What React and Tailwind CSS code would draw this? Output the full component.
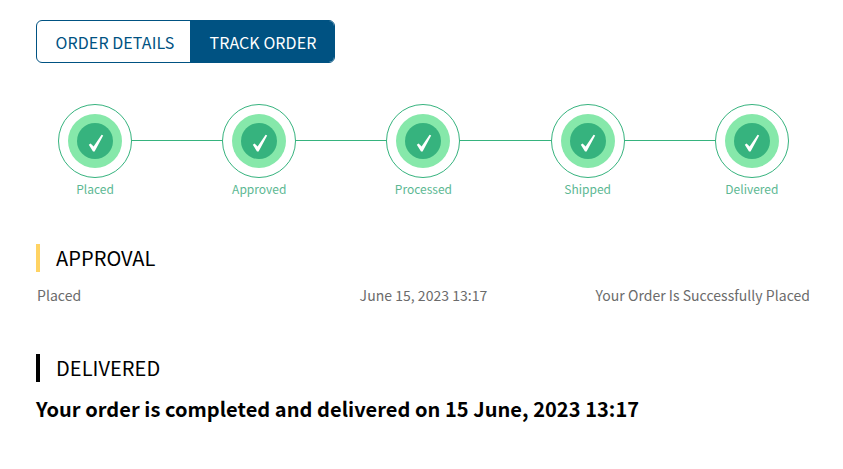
import React from 'react';

const steps = ['Placed', 'Approved', 'Processed', 'Shipped', 'Delivered'];

const Step = ({ label }) => (
    <div className="relative flex w-[74px] flex-col items-center">
        <div className="flex h-[74px] w-[74px] items-center justify-center rounded-full border border-[#36b37e] bg-white">
            <div className="flex h-[54px] w-[54px] items-center justify-center rounded-full bg-[#86e8aa]">
                <div className="flex h-9 w-9 items-center justify-center rounded-full bg-[#36b37e]">
                    <svg className="mt-[3px] ml-px" width="16" height="18" viewBox="0 0 16 18" fill="white">
                        <path d="M0.8 10.8 L2.6 9.6 L5.6 12.6 L13.6 0.8 L15.2 1.6 L6.6 17.4 L5 17.4 Z" />
                    </svg>
                </div>
            </div>
        </div>
        <span className="mt-[2px] whitespace-nowrap text-xs leading-[18px] text-[#5cb893]">{label}</span>
    </div>
);

const App = () => {
    return (
        <div className="h-[469px] w-[843px] bg-white pl-9 pt-5 font-['Noto_Sans_CJK_SC',sans-serif]">
            <div className="flex h-[43px] w-[299px] overflow-hidden rounded-md border border-[#005282]">
                <div className="flex w-[153px] items-center justify-center pl-[3px] text-base tracking-[0.08px] text-[#005282]">ORDER DETAILS</div>
                <div className="flex flex-1 items-center justify-center bg-[#005282] pl-[2px] text-base tracking-[0.08px] text-white">TRACK ORDER</div>
            </div>

            <div className="relative mt-[41px] ml-[22px] flex w-[730.9px] justify-between">
                <div className="absolute left-[37px] right-[37px] top-[36px] h-px bg-[#36b37e]" />
                {steps.map((step) => (
                    <Step key={step} label={step} />
                ))}
            </div>

            <div className="mt-[46px] flex h-7 items-center border-l-4 border-[#ffd363] pl-4 text-xl tracking-[0.05px] text-black">APPROVAL</div>
            <div className="mt-[13px] grid w-[774px] grid-cols-3 pl-px text-sm leading-5 tracking-[0.03px] text-[#6b6b6b]">
                <span>Placed</span>
                <span className="text-center">June 15, 2023 13:17</span>
                <span className="text-right">Your Order Is Successfully Placed</span>
            </div>

            <div className="mt-[49px] flex h-7 items-center border-l-4 border-black pl-4 text-xl tracking-[0.05px] text-black">DELIVERED</div>
            <div className="mt-[13px] text-xl leading-7 font-bold tracking-[0.05px] text-black">Your order is completed and delivered on 15 June, 2023 13:17</div>
        </div>
    );
};

export default App;
